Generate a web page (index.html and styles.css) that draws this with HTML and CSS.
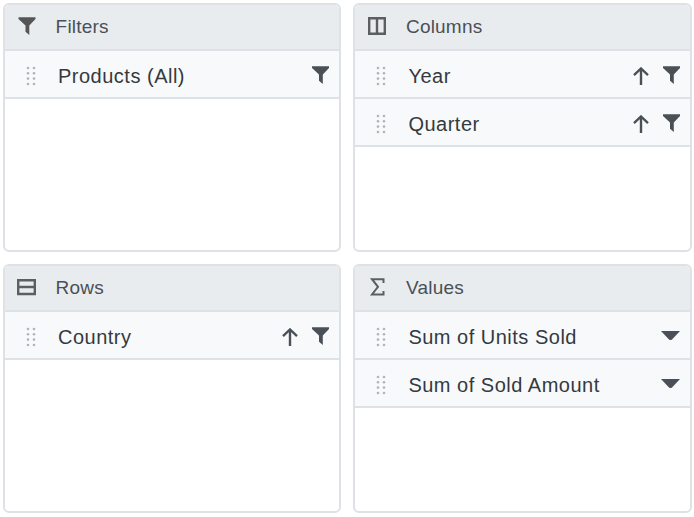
FILE: index.html
```html
<!DOCTYPE html>
<html lang="en">
<head>
<meta charset="utf-8">
<title>Pivot field list</title>
<link rel="stylesheet" href="styles.css">
</head>
<body>
<svg class="defs" width="0" height="0" aria-hidden="true">
  <symbol id="funnel" viewBox="0 0 17 18"><path d="M0 0.3H17V2L10.8 8.6V18L7 14.8V8.6L0 2Z"/></symbol>
  <symbol id="arrow" viewBox="0 0 16 18"><path d="M8 1.5V18M1 8.2L8 1.5L15 8.2" fill="none" stroke="currentColor" stroke-width="2.4"/></symbol>
  <symbol id="drag" viewBox="0 0 10 20"><g><circle cx="2" cy="2" r="1.3"/><circle cx="8" cy="2" r="1.3"/><circle cx="2" cy="7.3" r="1.3"/><circle cx="8" cy="7.3" r="1.3"/><circle cx="2" cy="12.6" r="1.3"/><circle cx="8" cy="12.6" r="1.3"/><circle cx="2" cy="18" r="1.3"/><circle cx="8" cy="18" r="1.3"/></g></symbol>
  <symbol id="caret" viewBox="0 0 19 9"><path d="M0 0H19L11 8.6Q9.5 9.6 8 8.6Z"/></symbol>
</svg>
<main class="grid">
  <section class="panel">
    <header class="head"><svg class="hicon"><use href="#funnel"/></svg><span>Filters</span></header>
    <div class="item">
      <svg class="drag"><use href="#drag"/></svg><span class="name">Products (All)</span>
      <svg class="act funnel"><use href="#funnel"/></svg>
    </div>
  </section>
  <section class="panel">
    <header class="head">
      <svg class="hicon" viewBox="0 0 18 18"><path d="M1.2 1.2H16.8V16.8H1.2ZM9 1.2V16.8" fill="none" stroke="currentColor" stroke-width="2.4"/></svg><span>Columns</span>
    </header>
    <div class="item">
      <svg class="drag"><use href="#drag"/></svg><span class="name">Year</span>
      <svg class="act arrow"><use href="#arrow"/></svg><svg class="act funnel"><use href="#funnel"/></svg>
    </div>
    <div class="item">
      <svg class="drag"><use href="#drag"/></svg><span class="name">Quarter</span>
      <svg class="act arrow"><use href="#arrow"/></svg><svg class="act funnel"><use href="#funnel"/></svg>
    </div>
  </section>
  <section class="panel">
    <header class="head">
      <svg class="hicon wide" viewBox="0 0 19 18"><path d="M1.2 2.2H17.8V16H1.2ZM1.2 9H17.8" fill="none" stroke="currentColor" stroke-width="2.4"/></svg><span>Rows</span>
    </header>
    <div class="item">
      <svg class="drag"><use href="#drag"/></svg><span class="name">Country</span>
      <svg class="act arrow"><use href="#arrow"/></svg><svg class="act funnel"><use href="#funnel"/></svg>
    </div>
  </section>
  <section class="panel">
    <header class="head">
      <svg class="hicon" viewBox="0 0 18 18"><path d="M15.5 5V1.2H4L10 8.8L4 16.5H15.5V13" fill="none" stroke="currentColor" stroke-width="2"/></svg><span>Values</span>
    </header>
    <div class="item">
      <svg class="drag"><use href="#drag"/></svg><span class="name">Sum of Units Sold</span>
      <svg class="act caret"><use href="#caret"/></svg>
    </div>
    <div class="item">
      <svg class="drag"><use href="#drag"/></svg><span class="name">Sum of Sold Amount</span>
      <svg class="act caret"><use href="#caret"/></svg>
    </div>
  </section>
</main>
</body>
</html>
```
FILE: styles.css
```css
html, body {
  margin: 0;
  background: #fff;
}
body {
  font-family: "Liberation Sans", Arial, sans-serif;
  color: #343a40;
}
.defs {
  position: absolute;
}
.grid {
  display: grid;
  grid-template-columns: 338.4px 338.4px;
  grid-template-rows: 249px 249px;
  column-gap: 12px;
  row-gap: 12px;
  padding: 3px;
}
.panel {
  border: 2px solid #dee2e6;
  border-radius: 6px;
  overflow: hidden;
  background: #fff;
}
.head {
  display: flex;
  align-items: center;
  height: 44px;
  border-bottom: 2px solid #dee2e6;
  background: #e9ecef;
  padding-left: 13px;
  font-size: 19px;
  letter-spacing: 0.2px;
  color: #495057;
}
.hicon {
  width: 18px;
  height: 18px;
  margin-right: 19.6px;
  margin-bottom: 2px;
  color: #5c5f62;
  fill: #555;
  flex: none;
}
.hicon.wide {
  width: 19px;
  margin-left: -1px;
}
.item {
  display: flex;
  align-items: center;
  height: 42px;
  border-bottom: 2px solid #dee2e6;
  background: #f8f9fa;
  padding: 4px 10px 0 20px;
  font-size: 20px;
  letter-spacing: 0.5px;
  color: #343a40;
}
.drag {
  width: 12px;
  height: 20px;
  margin-right: 21px;
  fill: #adb5bd;
  flex: none;
}
.name {
  flex: 1;
}
.act {
  flex: none;
  fill: #495057;
  color: #495057;
}
.funnel {
  width: 17px;
  height: 18px;
  margin-bottom: 2px;
}
.arrow {
  width: 16px;
  height: 18px;
  margin-right: 14px;
  margin-bottom: 1px;
}
.caret {
  width: 19px;
  height: 9px;
  margin-bottom: 3px;
}
```
